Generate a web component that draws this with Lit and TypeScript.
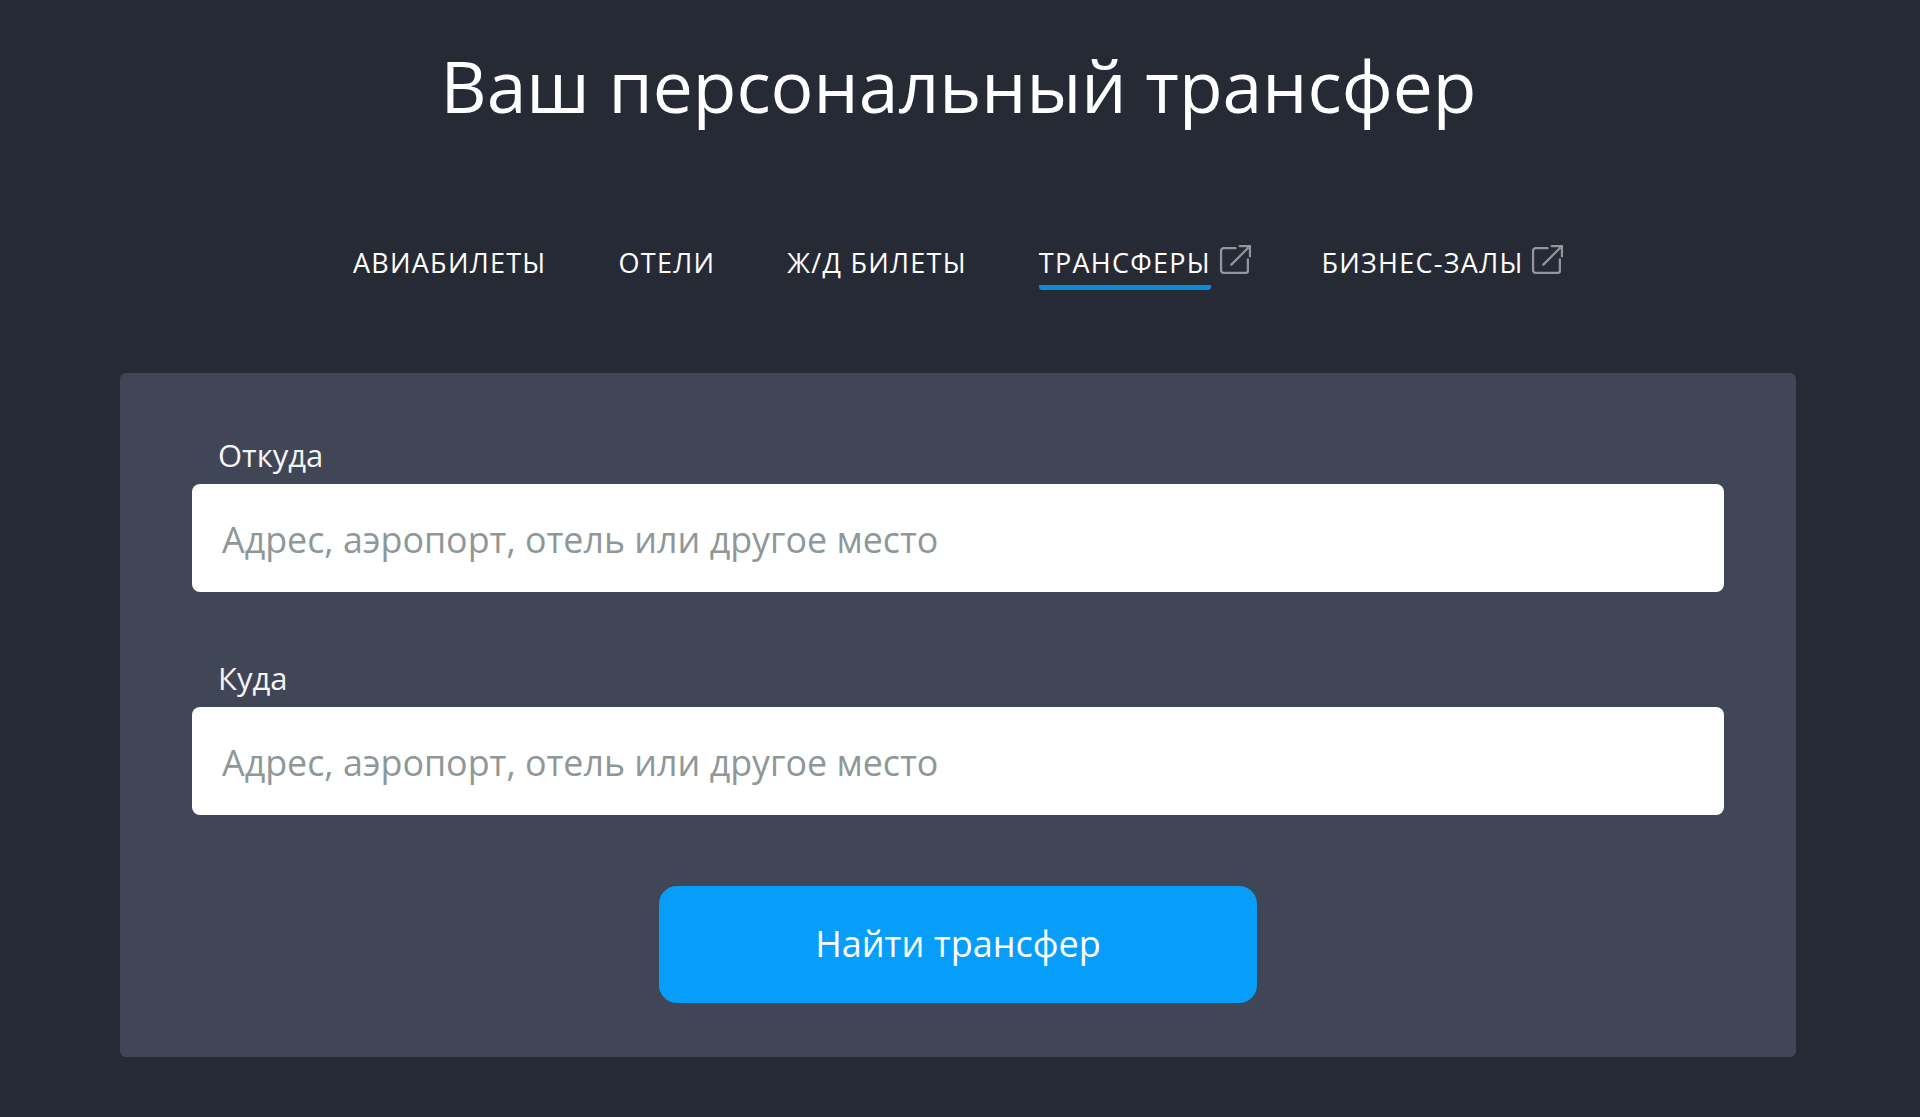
import { LitElement, html, css } from "lit";
import { customElement } from "lit/decorators.js";

const ext = html`<svg class="ext" viewBox="0 0 32 32" fill="none" stroke="currentColor" stroke-width="2.2" stroke-linecap="round" stroke-linejoin="round"><path d="M16 4H4a3 3 0 0 0-2 2v20a3 3 0 0 0 2 2h22a2 2 0 0 0 2-2V15"/><path d="M12 20 30 2M20 2h10v10"/></svg>`;

@customElement("app-root")
export class AppRoot extends LitElement {
  static styles = css`
    :host { display: block; height: 1117px; background: #262a35; font-family: "Open Sans", sans-serif; color: #fff; overflow: hidden; }
    h1 { margin: 0; padding: 39px 3px 0 0; height: 135px; font-size: 71.4px; line-height: 94px; font-weight: 400; text-align: center; }
    nav { display: flex; justify-content: center; gap: 72px; margin-top: 71px; height: 128px; padding-right: 5px; }
    .item { display: flex; align-items: flex-start; gap: 7.5px; font-size: 27px; font-weight: 500; letter-spacing: 1.27px; line-height: 36px; height: 45px; }
    .label { display: block; height: 45px; box-sizing: border-box; }
    .active { border-bottom: 5px solid #0e8bd6; border-radius: 0 0 3px 3px; }
    .ext { width: 33px; height: 33px; color: #92959c; margin: -1px -2px 0 0; }
    .panel { margin: 0 124px 0 120px; height: 684px; box-sizing: border-box; background: #404656; border-radius: 6px; padding: 62px 72px 54px; }
    .lab { display: block; margin-left: 26px; height: 49px; font-size: 31px; line-height: 40px; color: #f4f5f7; }
    .field { display: flex; align-items: center; height: 108px; background: #fff; border-radius: 8px; padding-left: 30px; padding-top: 2px; box-sizing: border-box; font-size: 35.8px; color: #8f9799; margin-bottom: 66px; }
    .field.last { margin-bottom: 71px; }
    button { display: block; margin: 0 auto; padding: 0 0 3px; width: 598px; height: 117px; border: 0; border-radius: 18px; background: #069efa; color: #fff; font: 500 36px "Open Sans", sans-serif; }
  `;
  render() {
    return html`
      <h1>Ваш персональный трансфер</h1>
      <nav>
        <div class="item">АВИАБИЛЕТЫ</div>
        <div class="item">ОТЕЛИ</div>
        <div class="item">Ж/Д БИЛЕТЫ</div>
        <div class="item"><span class="label active">ТРАНСФЕРЫ</span>${ext}</div>
        <div class="item"><span class="label">БИЗНЕС-ЗАЛЫ</span>${ext}</div>
      </nav>
      <div class="panel">
        <span class="lab">Откуда</span>
        <div class="field">Адрес, аэропорт, отель или другое место</div>
        <span class="lab">Куда</span>
        <div class="field last">Адрес, аэропорт, отель или другое место</div>
        <button>Найти трансфер</button>
      </div>
    `;
  }
}
